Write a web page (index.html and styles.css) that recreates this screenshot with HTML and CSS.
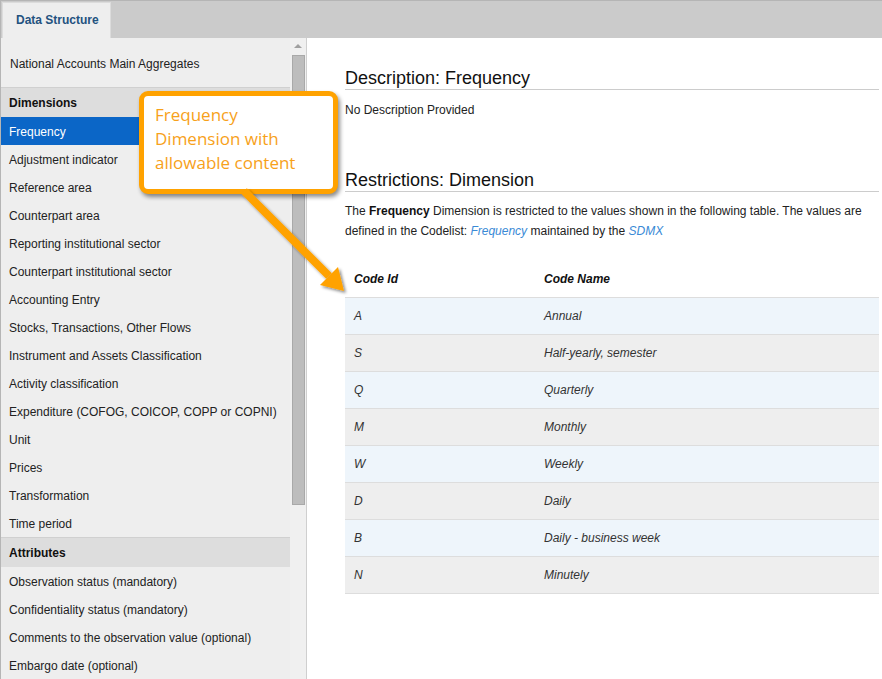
FILE: index.html
```html
<!DOCTYPE html>
<html>
<head>
<meta charset="utf-8">
<link rel="stylesheet" href="styles.css">
</head>
<body>
<div class="app">
  <div class="tabbar">
    <div class="tab">Data Structure</div>
  </div>
  <div class="body">
    <aside class="sidebar">
      <div class="list">
        <div class="title">National Accounts Main Aggregates</div>
        <div class="group">Dimensions</div>
        <div class="item selected">Frequency</div>
        <div class="item">Adjustment indicator</div>
        <div class="item">Reference area</div>
        <div class="item">Counterpart area</div>
        <div class="item">Reporting institutional sector</div>
        <div class="item">Counterpart institutional sector</div>
        <div class="item">Accounting Entry</div>
        <div class="item">Stocks, Transactions, Other Flows</div>
        <div class="item">Instrument and Assets Classification</div>
        <div class="item">Activity classification</div>
        <div class="item">Expenditure (COFOG, COICOP, COPP or COPNI)</div>
        <div class="item">Unit</div>
        <div class="item">Prices</div>
        <div class="item">Transformation</div>
        <div class="item">Time period</div>
        <div class="group group-top">Attributes</div>
        <div class="item">Observation status (mandatory)</div>
        <div class="item">Confidentiality status (mandatory)</div>
        <div class="item">Comments to the observation value (optional)</div>
        <div class="item">Embargo date (optional)</div>
      </div>
      <div class="scrollbar">
        <div class="arrow-up"></div>
        <div class="thumb"></div>
      </div>
    </aside>
    <main class="main">
      <h2 class="heading">Description: Frequency</h2>
      <p class="desc">No Description Provided</p>
      <h2 class="heading heading-2">Restrictions: Dimension</h2>
      <p class="para">The <b>Frequency</b> Dimension is restricted to the values shown in the following table. The values are defined in the Codelist: <a class="link">Frequency</a> maintained by the <a class="link">SDMX</a></p>
      <table class="codes">
        <thead>
          <tr><th class="c1">Code Id</th><th>Code Name</th></tr>
        </thead>
        <tbody>
          <tr class="odd"><td class="c1">A</td><td>Annual</td></tr>
          <tr class="even"><td class="c1">S</td><td>Half-yearly, semester</td></tr>
          <tr class="odd"><td class="c1">Q</td><td>Quarterly</td></tr>
          <tr class="even"><td class="c1">M</td><td>Monthly</td></tr>
          <tr class="odd"><td class="c1">W</td><td>Weekly</td></tr>
          <tr class="even"><td class="c1">D</td><td>Daily</td></tr>
          <tr class="odd"><td class="c1">B</td><td>Daily - business week</td></tr>
          <tr class="even"><td class="c1">N</td><td>Minutely</td></tr>
        </tbody>
      </table>
    </main>
  </div>
  <div class="callout">Frequency<br>Dimension with<br>allowable content</div>
  <svg class="pointer" width="882" height="679" viewBox="0 0 882 679">
    <defs>
      <filter id="sh" x="-20%" y="-20%" width="140%" height="140%">
        <feDropShadow dx="2" dy="2" stdDeviation="1.5" flood-color="#000" flood-opacity="0.45"/>
      </filter>
    </defs>
    <g filter="url(#sh)">
      <line x1="243" y1="190" x2="328" y2="275" stroke="#ffa200" stroke-width="8"/>
      <polygon points="343,290 319,284 337,266" fill="#ffa200"/>
    </g>
  </svg>
</div>
</body>
</html>
```
FILE: styles.css
```css
* { box-sizing: border-box; }
html, body { margin: 0; padding: 0; }
body {
  font-family: "Liberation Sans", Arial, sans-serif;
  font-size: 12px;
  color: #222;
  background: #fff;
}
.app {
  position: relative;
  width: 882px;
  height: 679px;
  overflow: hidden;
  border-top: 1px solid #b5b5b5;
  border-left: 1px solid #b5b5b5;
  display: flex;
  flex-direction: column;
}
.tabbar {
  height: 37px;
  background: #cbcbcb;
  padding: 1px 0 0 1px;
  display: flex;
  flex-shrink: 0;
}
.tab {
  width: 109px;
  background: #eeeeee;
  border: 1px solid #dcdcdc;
  border-bottom: none;
  color: #23527f;
  font-weight: bold;
  font-size: 12px;
  padding-left: 13px;
  line-height: 34px;
}
.body {
  flex: 1;
  display: flex;
  min-height: 0;
}
.sidebar {
  width: 306px;
  flex-shrink: 0;
  display: flex;
  background: #eeeeee;
  border-right: 1px solid #cfcfcf;
  overflow: hidden;
}
.list {
  width: 289px;
  flex-shrink: 0;
}
.title {
  height: 50px;
  line-height: 52px;
  padding-left: 9px;
  border-bottom: 1px solid #d0d0d0;
}
.group {
  height: 29px;
  line-height: 30px;
  padding-left: 8px;
  background: #dddddd;
  font-weight: bold;
  color: #111;
}
.group-top {
  height: 30px;
  border-top: 1px solid #d0d0d0;
}
.item {
  height: 28px;
  line-height: 30px;
  padding-left: 8px;
  white-space: nowrap;
  color: #222;
}
.item.selected {
  background: #0b66c7;
  color: #fff;
}
.scrollbar {
  width: 17px;
  background: #f0f0f0;
  display: flex;
  flex-direction: column;
  align-items: center;
  padding-top: 6px;
}
.arrow-up {
  width: 0;
  height: 0;
  border-left: 4px solid transparent;
  border-right: 4px solid transparent;
  border-bottom: 4px solid #a0a0a0;
}
.thumb {
  margin-top: 7px;
  width: 13px;
  height: 450px;
  background: #bdbdbd;
  border: 1px solid #a9a9a9;
}
.main {
  flex: 1;
  padding: 0 3px 0 38px;
  background: #fff;
}
.heading {
  margin: 29px 0 0 0;
  font-size: 18px;
  font-weight: normal;
  line-height: 22px;
  color: #111;
  border-bottom: 1px solid #cccccc;
  padding-bottom: 0;
}
.heading-2 {
  margin-top: 51px;
}
.desc {
  margin: 12px 0 0 0;
  line-height: 16px;
}
.para {
  margin: 9px 0 0 0;
  line-height: 20px;
}
.para b { color: #111; }
.link {
  color: #3a8ad6;
  font-style: italic;
}
.codes {
  margin-top: 19px;
  width: 100%;
  border-collapse: collapse;
}
.codes th {
  text-align: left;
  font-style: italic;
  font-weight: bold;
  height: 37px;
  padding: 2px 0 0 0;
  border-bottom: 1px solid #dddddd;
  color: #111;
}
.codes td {
  height: 37px;
  padding: 0;
  font-style: italic;
  border-bottom: 1px solid #dddddd;
  color: #333;
}
.codes .c1 {
  width: 199px;
  padding-left: 9px;
}
.codes tr.odd td { background: #eef5fb; }
.codes tr.even td { background: #eeeeee; }
.callout {
  position: absolute;
  left: 138px;
  top: 90px;
  width: 199px;
  height: 103px;
  background: #fff;
  border: 5px solid #ffa200;
  border-radius: 9px;
  box-shadow: 2px 3px 4px rgba(0,0,0,0.45);
  color: #f7a11a;
  font-family: "Open Sans", "Noto Sans", sans-serif;
  font-size: 17px;
  line-height: 24px;
  padding: 7px 0 0 11px;
}
.pointer {
  position: absolute;
  left: 0;
  top: 0;
  pointer-events: none;
}
```
